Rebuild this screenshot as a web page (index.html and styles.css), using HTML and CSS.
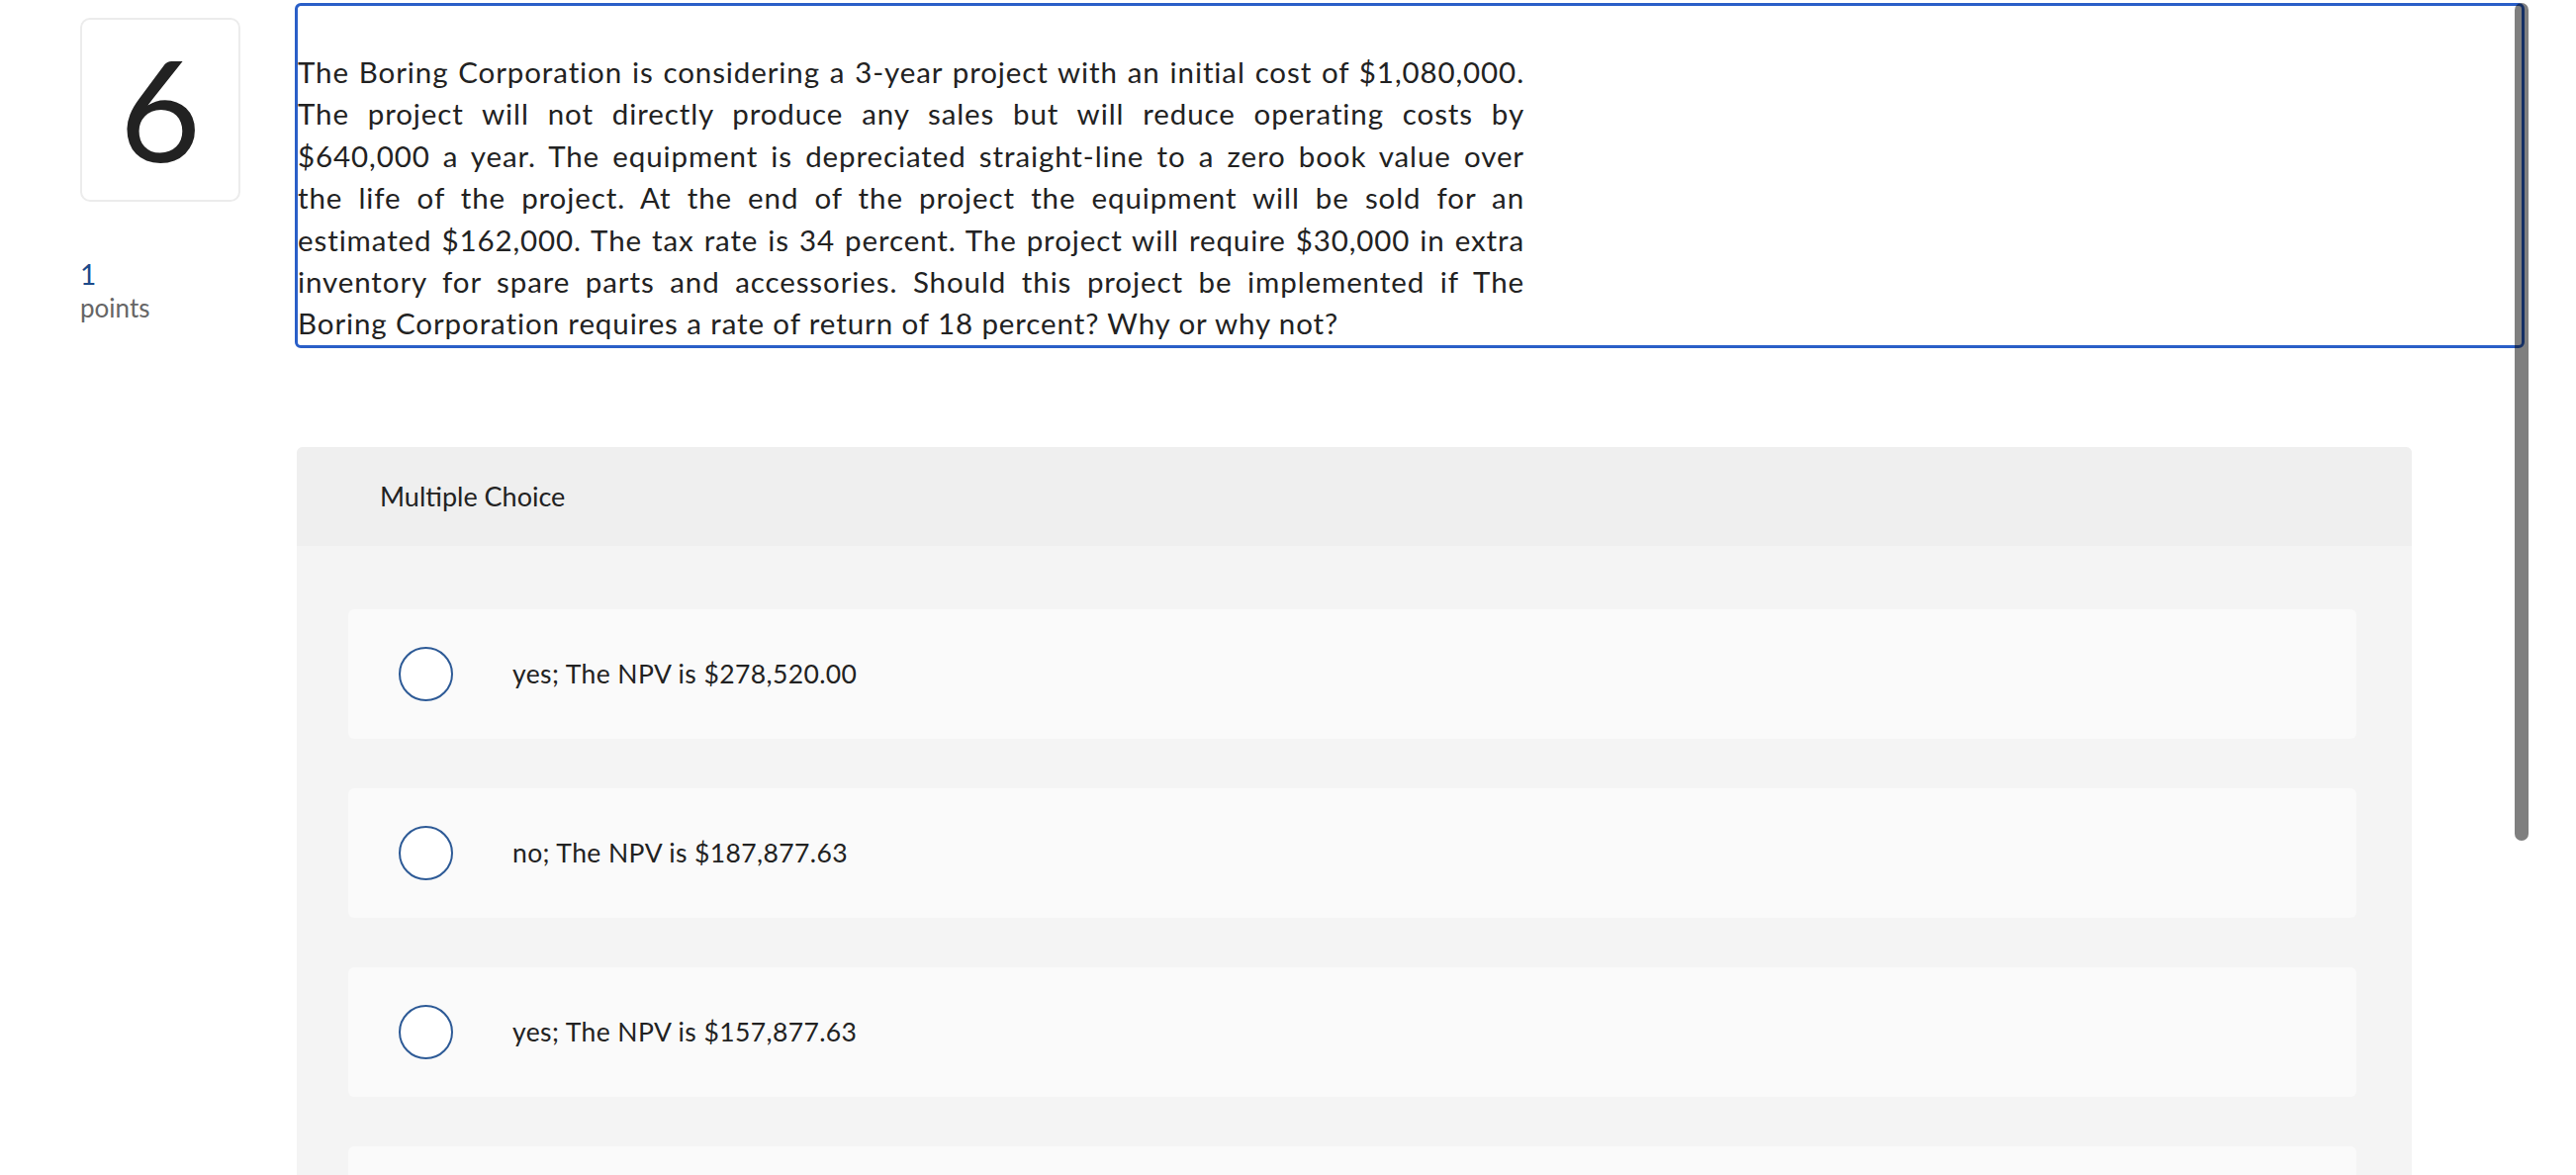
FILE: index.html
```html
<!DOCTYPE html>
<html lang="en">
<head>
<meta charset="utf-8">
<title>Question 6</title>
<link rel="stylesheet" href="styles.css">
</head>
<body>
<div class="page">
  <aside class="side">
    <div class="qnum">6</div>
    <div class="pts">
      <div class="pts-val">1</div>
      <div class="pts-label">points</div>
    </div>
  </aside>
  <main class="main">
    <div class="question">
      <p class="qtext">
        <span class="ln">The Boring Corporation is considering a 3-year project with an initial cost of $1,080,000.</span>
        <span class="ln">The project will not directly produce any sales but will reduce operating costs by</span>
        <span class="ln">$640,000 a year. The equipment is depreciated straight-line to a zero book value over</span>
        <span class="ln">the life of the project. At the end of the project the equipment will be sold for an</span>
        <span class="ln">estimated $162,000. The tax rate is 34 percent. The project will require $30,000 in extra</span>
        <span class="ln">inventory for spare parts and accessories. Should this project be implemented if The</span>
        <span class="ln ln-last">Boring Corporation requires a rate of return of 18 percent? Why or why not?</span>
      </p>
    </div>
    <section class="mc">
      <div class="mc-head">Multiple Choice</div>
      <div class="mc-body">
        <label class="opt"><span class="radio"></span><span class="opt-text">yes; The NPV is $278,520.00</span></label>
        <label class="opt"><span class="radio"></span><span class="opt-text">no; The NPV is $187,877.63</span></label>
        <label class="opt"><span class="radio"></span><span class="opt-text">yes; The NPV is $157,877.63</span></label>
        <label class="opt"><span class="radio"></span><span class="opt-text"></span></label>
      </div>
    </section>
  </main>
</div>
<div class="scroll-thumb"></div>
</body>
</html>
```
FILE: styles.css
```css
html, body {
  margin: 0;
  padding: 0;
  height: 100%;
  overflow: hidden;
  background: #ffffff;
}
body {
  font-family: "Lato", "Open Sans", sans-serif;
  color: #222222;
}
.page {
  display: flex;
  align-items: flex-start;
  padding-top: 3px;
}
.side {
  width: 162px;
  margin-left: 81px;
  margin-right: 55px;
  padding-top: 15px;
  flex: none;
}
.qnum {
  box-sizing: border-box;
  height: 186px;
  border: 2px solid #ececec;
  border-radius: 10px;
  display: flex;
  align-items: center;
  justify-content: center;
  font-size: 142px;
  line-height: 1;
  color: #222222;
  padding-bottom: 4px;
}
.pts {
  margin-top: 56px;
}
.pts-val {
  font-size: 28px;
  line-height: 34px;
  color: #1d4a8a;
}
.pts-label {
  font-size: 26px;
  line-height: 34px;
  color: #666666;
}
.main {
  flex: 1;
  margin-right: 52px;
  min-width: 0;
}
.question {
  border: 3px solid #2a5fc8;
  border-radius: 6px;
  padding-top: 46px;
}
.qtext {
  margin: 0;
  width: 1240px;
  font-size: 29.5px;
  letter-spacing: 0.9px;
  line-height: 42.4px;
  color: #222222;
}
.ln {
  display: block;
  text-align: justify;
  text-align-last: justify;
  white-space: nowrap;
}
.ln-last {
  text-align-last: left;
}
.mc {
  margin: 100px 114px 0 2px;
  background: #f4f4f4;
  border-radius: 6px 6px 0 0;
}
.mc-head {
  height: 100px;
  display: flex;
  align-items: center;
  padding-left: 84px;
  background: #efefef;
  border-radius: 6px 6px 0 0;
  font-size: 27px;
  color: #222222;
}
.mc-body {
  display: flex;
  flex-direction: column;
  gap: 50px;
  padding: 64px 56px 40px 52px;
}
.opt {
  height: 131px;
  display: flex;
  align-items: center;
  background: #fafafa;
  border-radius: 6px;
  padding-left: 51px;
}
.radio {
  box-sizing: border-box;
  width: 55px;
  height: 55px;
  border: 2.5px solid #2d5a96;
  border-radius: 50%;
  background: #ffffff;
  flex: none;
}
.opt-text {
  margin-left: 60px;
  font-size: 26.5px;
  letter-spacing: 0.4px;
  color: #222222;
}
.scroll-thumb {
  position: absolute;
  left: 2542px;
  top: 3px;
  width: 14px;
  height: 847px;
  border-radius: 7px;
  background: rgba(0, 0, 0, 0.5);
}
```
